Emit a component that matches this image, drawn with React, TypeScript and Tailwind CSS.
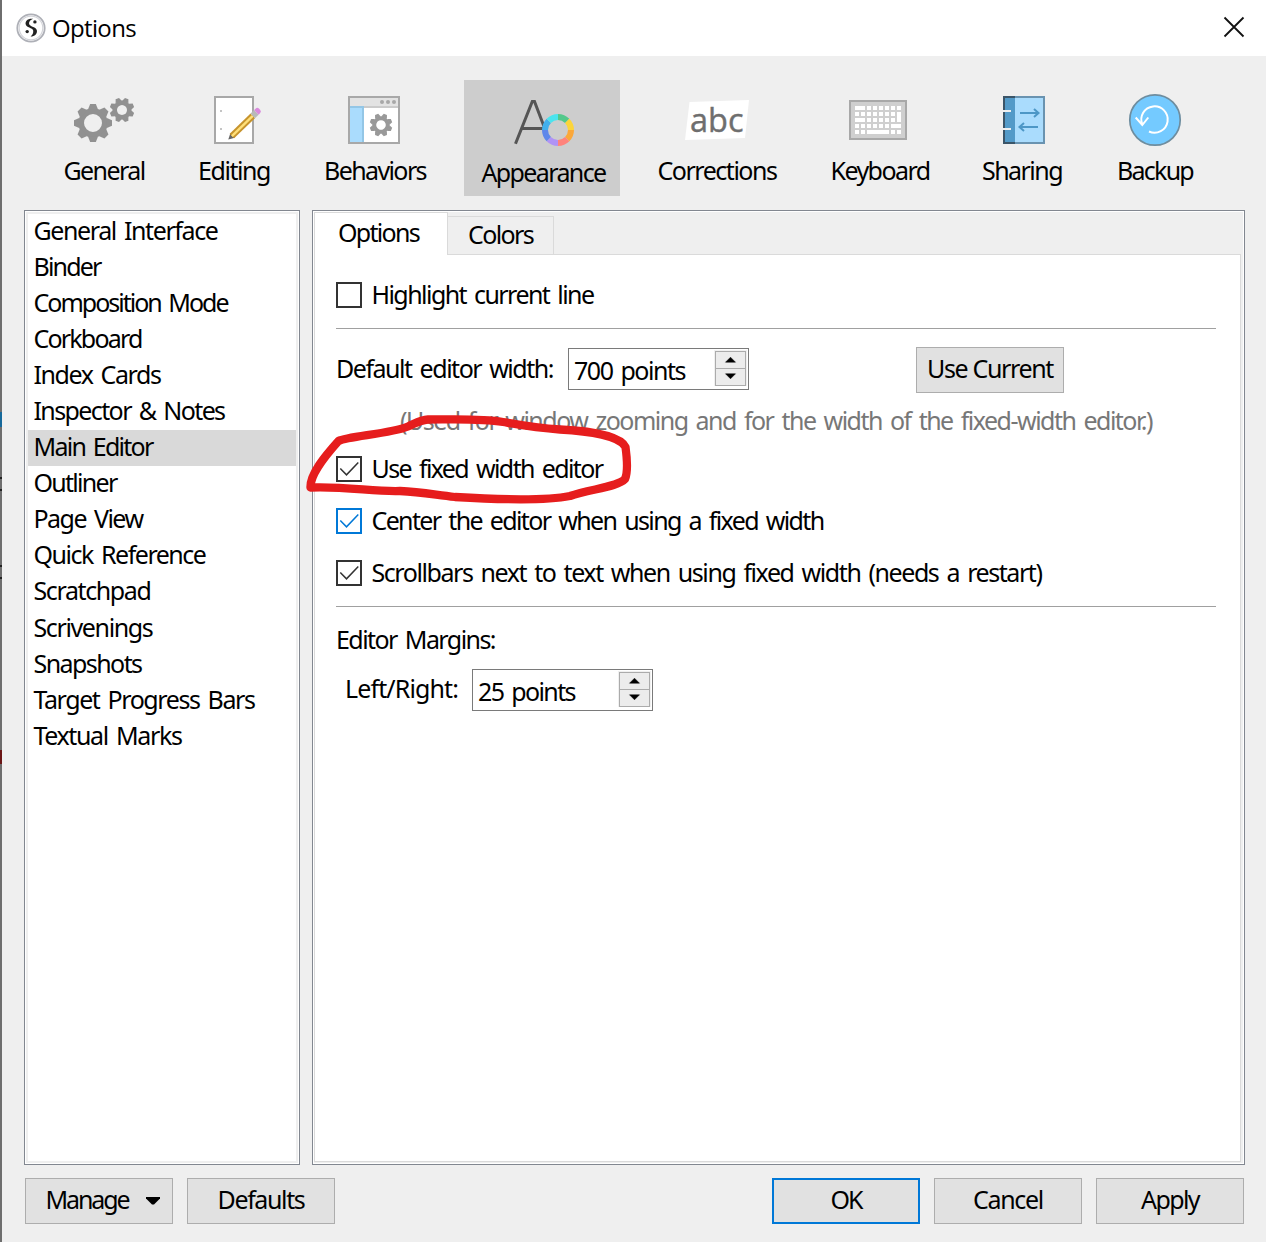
import { useLayoutEffect, useRef, useState } from "react";
import type { ReactNode } from "react";

// Label whose letter spacing is adjusted so the text fills the given width
function Label({ text, width, className = "" }: { text: string; width: number; className?: string }) {
    const ref = useRef<HTMLSpanElement>(null);
    const [spacing, setSpacing] = useState(0);

    useLayoutEffect(() => {
        if (ref.current) {
            setSpacing((width - ref.current.getBoundingClientRect().width) / text.length);
        }
    }, [text, width]);

    return (
        <span ref={ref} className={`inline-block whitespace-pre ${className}`} style={{ letterSpacing: `${spacing}px` }}>
            {text}
        </span>
    );
}

function Gear({ cx, cy, r, hole, turn = 0, color = "#919191" }: { cx: number; cy: number; r: number; hole: number; turn?: number; color?: string }) {
    const body = r * 0.77;
    return (
        <g transform={`translate(${cx} ${cy}) rotate(${turn})`} fill={color}>
            <circle r={(body + hole) / 2} fill="none" stroke={color} strokeWidth={body - hole} />
            {[0, 45, 90, 135, 180, 225, 270, 315].map((a) => (
                <path
                    key={a}
                    transform={`rotate(${a})`}
                    d={`M${-r * 0.27} ${-r * 0.7} L${-r * 0.15} ${-r} H${r * 0.15} L${r * 0.27} ${-r * 0.7}Z`}
                />
            ))}
        </g>
    );
}

const WHEEL = ["#53c88b", "#fcd53a", "#fba83a", "#ff837c", "#b093f5", "#5f87ea", "#42b0ec", "#4be4ee"];

// [x, y, width, height] of the wider keys
const WIDE_KEYS = [
    [11, 16, 10, 4],
    [11, 28, 10, 4],
    [53, 22, 4, 10],
    [47, 34, 10, 4],
    [23, 40, 22, 4],
];
const SMALL_KEYS = [
    { y: 16, xs: [23, 29, 35, 41, 47, 53] },
    { y: 22, xs: [11, 17, 23, 29, 35, 41, 47] },
    { y: 28, xs: [23, 29, 35, 41, 47] },
    { y: 34, xs: [11, 17, 23, 29, 35, 41] },
    { y: 40, xs: [11, 17, 47, 53] },
];

const GeneralIcon = (
    <>
        <Gear cx={25} cy={33} r={19} hole={9} />
        <Gear cx={54} cy={20} r={12.3} hole={5} turn={22.5} />
    </>
);

const EditingIcon = (
    <>
        <rect x="17" y="7" width="38" height="46" fill="#fff" stroke="#a8a8a8" strokeWidth="2" />
        <path d="M22 20h2v2h-2zM22 38h2v2h-2z" fill="#c4c4c4" />
        <g transform="translate(30.3 49.5) rotate(-44)">
            <path d="M0 0 L6 -3.2 V3.2Z" fill="#666" />
            <rect x="5" y="-3.2" width="29" height="6.4" fill="#c7942d" />
            <rect x="5" y="-1.2" width="29" height="2.4" fill="#ffe07a" />
            <rect x="34" y="-3.2" width="5" height="6.4" fill="#b9b9b9" />
            <path d="M39 -3.2h2a2.5 2.5 0 0 1 2.5 2.5v1.4a2.5 2.5 0 0 1 -2.5 2.5h-2z" fill="#d98bdc" />
        </g>
    </>
);

const BehaviorsIcon = (
    <>
        <rect x="10" y="7" width="50" height="46" fill="#fff" stroke="#a8a8a8" strokeWidth="2" />
        <rect x="11" y="8" width="48" height="8" fill="#e3e3e3" />
        <rect x="11" y="16" width="48" height="2" fill="#cbcbcb" />
        <rect x="11" y="16" width="14" height="36" fill="#93c6e6" />
        <rect x="11" y="18" width="12" height="34" fill="#aadcfd" />
        <circle cx="43" cy="12" r="2" fill="#a8a8a8" />
        <circle cx="49" cy="12" r="2" fill="#a8a8a8" />
        <circle cx="55" cy="12" r="2" fill="#a8a8a8" />
        <Gear cx={42} cy={35} r={11.4} hole={4.8} turn={22.5} color="#999" />
    </>
);

const AppearanceIcon = (
    <>
        <path d="M9.5 51.8 L26.3 9.5 H28.5 L38 34.5 M16 36.5 H38" fill="none" stroke="#555" strokeWidth="3" />
        {WHEEL.map((color, i) => (
            <path
                key={color}
                d="M52 25 A13 13 0 0 1 61.19 28.81"
                transform={`rotate(${i * 45} 52 38)`}
                fill="none"
                stroke={color}
                strokeWidth="6"
            />
        ))}
    </>
);

const CorrectionsIcon = (
    <>
        <path d="M8.5 12 L68 10 L64 48 L4 50Z" fill="#fff" />
        <text x="9" y="41.5" fontSize="32.5" fill="#6e6e6e" stroke="#6e6e6e" strokeWidth="0.4" fontFamily="'Open Sans', sans-serif">
            abc
        </text>
    </>
);

const KeyboardIcon = (
    <>
        <rect x="6" y="11" width="56" height="38" fill="#cfcfcf" stroke="#a8a8a8" strokeWidth="2" />
        {WIDE_KEYS.map(([x, y, w, h]) => (
            <rect key={`${x}-${y}`} x={x} y={y} width={w} height={h} fill="#fff" />
        ))}
        {SMALL_KEYS.map((row) => row.xs.map((x) => <rect key={`${x}-${row.y}`} x={x} y={row.y} width="4" height="4" fill="#fff" />))}
    </>
);

const SharingIcon = (
    <>
        <rect x="18" y="7" width="40" height="46" fill="#aadcfd" stroke="#6993b0" strokeWidth="2" />
        <path d="M29 7H18V53H29" fill="#539ac8" stroke="#3b5568" strokeWidth="2" />
        <path d="M17 21h8M17 39h8" stroke="#efefef" strokeWidth="2" />
        <path d="M34 23H52M48 19l4.5 4l-4.5 4M52 37H34M38 33l-4.5 4l4.5 4" fill="none" stroke="#4d97c6" strokeWidth="2" />
    </>
);

const BackupIcon = (
    <>
        <circle cx="36" cy="30" r="25.2" fill="#74caff" stroke="#6e8d9f" strokeWidth="1.7" />
        <path d="M30 41.5 A13.2 13.2 0 1 0 23.3 34.5" fill="none" stroke="#fff" strokeWidth="2" />
        <path d="M16.7 27.5 L23.3 35 L29.3 27.5" fill="none" stroke="#fff" strokeWidth="2" />
    </>
);

const SECTIONS: { title: string; width: number; box: string; icon: ReactNode; active?: boolean }[] = [
    { title: "General", width: 81, box: "ml-[43px] w-[118px]", icon: GeneralIcon },
    { title: "Editing", width: 72, box: "ml-[17px] w-[108px]", icon: EditingIcon },
    { title: "Behaviors", width: 102, box: "ml-[18px] w-[138px]", icon: BehaviorsIcon },
    { title: "Appearance", width: 124, box: "ml-[20px] w-[156px]", icon: AppearanceIcon, active: true },
    { title: "Corrections", width: 119, box: "ml-[20px] w-[154px]", icon: CorrectionsIcon },
    { title: "Keyboard", width: 99, box: "ml-[18px] w-[136px]", icon: KeyboardIcon },
    { title: "Sharing", width: 80, box: "ml-[16px] w-[116px]", icon: SharingIcon },
    { title: "Backup", width: 76, box: "ml-[18px] w-[114px]", icon: BackupIcon },
];

const PAGES = [
    { title: "General Interface", width: 184 },
    { title: "Binder", width: 67 },
    { title: "Composition Mode", width: 194 },
    { title: "Corkboard", width: 108 },
    { title: "Index Cards", width: 127 },
    { title: "Inspector & Notes", width: 191 },
    { title: "Main Editor", width: 119 },
    { title: "Outliner", width: 83 },
    { title: "Page View", width: 109 },
    { title: "Quick Reference", width: 172 },
    { title: "Scratchpad", width: 117 },
    { title: "Scrivenings", width: 119 },
    { title: "Snapshots", width: 108 },
    { title: "Target Progress Bars", width: 221 },
    { title: "Textual Marks", width: 148 },
];

function Check({ label, width, checked = false, focused = false }: { label: string; width: number; checked?: boolean; focused?: boolean }) {
    return (
        <div className="flex h-[26px] items-center">
            <div className={`size-[26px] border-2 bg-white ${focused ? "border-[#0078d7] text-[#0078d7]" : "border-[#333] text-[#333]"}`}>
                {checked && (
                    <svg viewBox="0 0 22 22" className="size-[22px]" fill="none" stroke="currentColor" strokeWidth="1.5">
                        <path d="M2.3 10.5 L8.5 16.8 L20.3 4.5" />
                    </svg>
                )}
            </div>
            <Label text={label} width={width} className="mb-[2px] ml-[9.5px]" />
        </div>
    );
}

function SpinBox({ value, width }: { value: string; width: number }) {
    return (
        <div className="flex h-[42px] w-[181px] justify-between border border-[#7a7a7a] bg-white pl-[5px] pr-[1px] pt-[1px]">
            <Label text={value} width={width} className="mt-[4px]" />
            <div className="flex h-[36px] w-[33px] flex-col border border-[#f0f0f0]">
                {["M10.5 11.2 L15.5 6.2 L20.5 11.2Z", "M10.5 5.8 L15.5 10.8 L20.5 5.8Z"].map((d, i) => (
                    <div key={d} className={`h-[18px] w-[31px] border border-[#ababab] bg-[#ececec] ${i ? "-mt-px" : ""}`}>
                        <svg viewBox="1 1 29 16" className="h-[16px] w-[29px]">
                            <path d={d} stroke="#000" strokeWidth="0.5" />
                        </svg>
                    </div>
                ))}
            </div>
        </div>
    );
}

function Button({ text, width, primary = false, caret = false }: { text: string; width: number; primary?: boolean; caret?: boolean }) {
    return (
        <button
            className={`flex h-[46px] w-[148px] items-center justify-center bg-[#e1e1e1] pb-[4px] ${caret ? "pl-[7px]" : ""} ${primary ? "border-2 border-[#0078d7]" : "border border-[#adadad]"}`}
        >
            <Label text={text} width={width} />
            {caret && (
                <svg viewBox="0 0 14 8" className="ml-[17px] mt-[4px] h-[8px] w-[14px]">
                    <path d="M0 0H14V1.5L8 7.5H6L0 1.5Z" />
                </svg>
            )}
        </button>
    );
}

export default function App() {
    return (
        <div className="relative flex h-[1242px] w-[1266px] overflow-hidden bg-[#efefef] font-['Noto_Sans',sans-serif] text-[25px] leading-[32px] text-black [word-spacing:3px]">
            {/* Sliver of the window behind */}
            <div className="flex w-[2px] shrink-0 flex-col bg-[#6e6e6e]">
                <div className="mt-[412px] h-[15px] bg-[#16699b]" />
                <div className="mt-[50px] h-[14px] border-y-2 border-[#222]" />
                <div className="mt-[74px] h-[14px] border-y-2 border-[#222]" />
                <div className="mt-[171px] h-[14px] bg-[#6b1616]" />
            </div>

            <div className="flex w-[1264px] flex-col">
                <header className="flex h-[56px] shrink-0 items-center bg-white pl-[14px] pr-[21px]">
                    <svg viewBox="0 0 30 30" className="mb-[1px] size-[30px]">
                        <circle cx="15" cy="15" r="13.7" fill="#fff" stroke="#aeb0b7" strokeWidth="1.8" />
                        <circle cx="15" cy="15" r="11.8" fill="#fff" stroke="#d3d4d9" strokeWidth="1.2" />
                        <path
                            d="M17.2 5.8 C12.5 5 9.2 7.4 9.6 11 C10.1 14.8 16.6 14.6 17.2 17.6 C17.6 20 16.4 22.3 14.6 23.6 C18.9 23.2 21.4 20.6 20.9 17.4 C20.3 13.8 14.2 13.8 13.2 11.2 C12.6 9.2 14.4 6.8 17.2 5.8Z"
                            fill="#222"
                        />
                        <circle cx="18.9" cy="8.9" r="1.7" fill="#222" />
                        <circle cx="11.2" cy="18.6" r="1.7" fill="#222" />
                    </svg>
                    <Label text="Options" width={84} className="mb-[1px] ml-[6px] font-['Open_Sans',sans-serif] text-[24px]" />
                    <svg viewBox="0 0 22 22" className="mb-[2px] ml-auto size-[22px]">
                        <path d="M1.5 1.5 L20.5 20.5 M20.5 1.5 L1.5 20.5" stroke="#111" strokeWidth="1.8" />
                    </svg>
                </header>

                <nav className="flex h-[154px] shrink-0 items-start pt-[22px]">
                    {SECTIONS.map((section) => (
                        <div
                            key={section.title}
                            className={`flex h-[116px] flex-col items-center pt-[12px] ${section.box} ${section.active ? "mt-[2px] bg-[#cdcdcd]" : ""}`}
                        >
                            <svg viewBox="0 0 72 60" className="h-[60px] w-[72px] shrink-0">
                                {section.icon}
                            </svg>
                            <Label text={section.title} width={section.width} className={`mt-[4px] ${section.active ? "ml-[3px]" : ""}`} />
                        </div>
                    ))}
                </nav>

                <div className="flex h-[955px] shrink-0 gap-[12px] pl-[22px]">
                    <aside className="w-[276px] border border-[#828790] bg-white p-px">
                        <div className="h-full border-2 border-[#efefef]">
                            {PAGES.map((page) => (
                                <div
                                    key={page.title}
                                    className={`pl-[5.5px] ${page.title === "Main Editor" ? "bg-[#d9d9d9]" : ""} ${page.title === "Scratchpad" ? "h-[37px]" : "h-[36px]"}`}
                                >
                                    <Label text={page.title} width={page.width} />
                                </div>
                            ))}
                        </div>
                    </aside>

                    <main className="w-[933px] border border-[#828790] bg-white p-px">
                        <div className="flex h-full flex-col bg-[#efefef] pb-px pr-[2px]">
                            <div className="flex h-[42px] shrink-0 items-end">
                                <div className="z-10 -mb-px flex h-[43px] w-[134px] border border-b-0 border-[#dadada] bg-white pl-[23px] pt-[3px]">
                                    <Label text="Options" width={81} />
                                </div>
                                <div className="flex h-[38px] w-[106px] border border-b-0 border-l-0 border-[#dadada] pl-[20px] pt-[1px]">
                                    <Label text="Colors" width={65} />
                                </div>
                            </div>

                            <div className="flex grow flex-col border border-[#dadada] bg-white pl-[21px] pr-[24px] pt-[27px]">
                                <Check label="Highlight current line" width={222} />
                                <hr className="mt-[20px] border-t border-[#a0a0a0]" />

                                <div className="mt-[18px] flex h-[46px] items-center">
                                    <Label text="Default editor width:" width={217} className="-mt-[4px]" />
                                    <div className="ml-[15px] mt-[-2px]">
                                        <SpinBox value="700 points" width={111} />
                                    </div>
                                    <div className="ml-[167px]">
                                        <Button text="Use Current" width={126} />
                                    </div>
                                </div>

                                <div className="mb-[18px] ml-[64px] mt-[11px] h-[34px] text-[#777]">
                                    <Label text="(Used for window zooming and for the width of the fixed-width editor.)" width={752} />
                                </div>

                                <div className="flex flex-col gap-[26px]">
                                    <Check label="Use fixed width editor" width={231} checked />
                                    <Check label="Center the editor when using a fixed width" width={452} checked focused />
                                    <Check label="Scrollbars next to text when using fixed width (needs a restart)" width={670} checked />
                                </div>
                                <hr className="mt-[20px] border-t border-[#a0a0a0]" />

                                <Label text="Editor Margins:" width={159} className="mt-[16px] self-start" />
                                <div className="ml-[9px] mt-[14px] flex h-[42px] items-start">
                                    <Label text="Left/Right:" width={113} className="mt-[3px]" />
                                    <div className="ml-[14px]">
                                        <SpinBox value="25 points" width={97} />
                                    </div>
                                </div>
                            </div>
                        </div>
                    </main>
                </div>

                <footer className="flex pl-[23px] pr-[22px] pt-[13px]">
                    <div className="flex gap-[14px]">
                        <Button text="Manage" width={83} caret />
                        <Button text="Defaults" width={87} />
                    </div>
                    <div className="ml-auto flex gap-[14px]">
                        <Button text="OK" width={31} primary />
                        <Button text="Cancel" width={70} />
                        <Button text="Apply" width={58} />
                    </div>
                </footer>
            </div>

            {/* Hand-drawn marker loop */}
            <svg viewBox="0 0 340 100" className="absolute left-[300px] top-[410px] z-20 h-[100px] w-[340px]">
                <path
                    d="M10.5 77.5 C10 64 25 46 38.5 31 C48 26 90 24 108 16.5 C116 13 120 10 128 9.5 C150 9.5 180 8 203 12 C220 15 235 18 260 19.5 C290 21 320 26 325.5 37 C327 48 328 62 325 69 C318 77 290 79 270 86 C240 92 180 88.5 155 87 C130 84 120 82 100 81 C75 82 45 76 10.5 77.5Z"
                    fill="none"
                    stroke="#e61d1d"
                    strokeWidth="8.3"
                    strokeLinejoin="round"
                />
            </svg>
        </div>
    );
}
